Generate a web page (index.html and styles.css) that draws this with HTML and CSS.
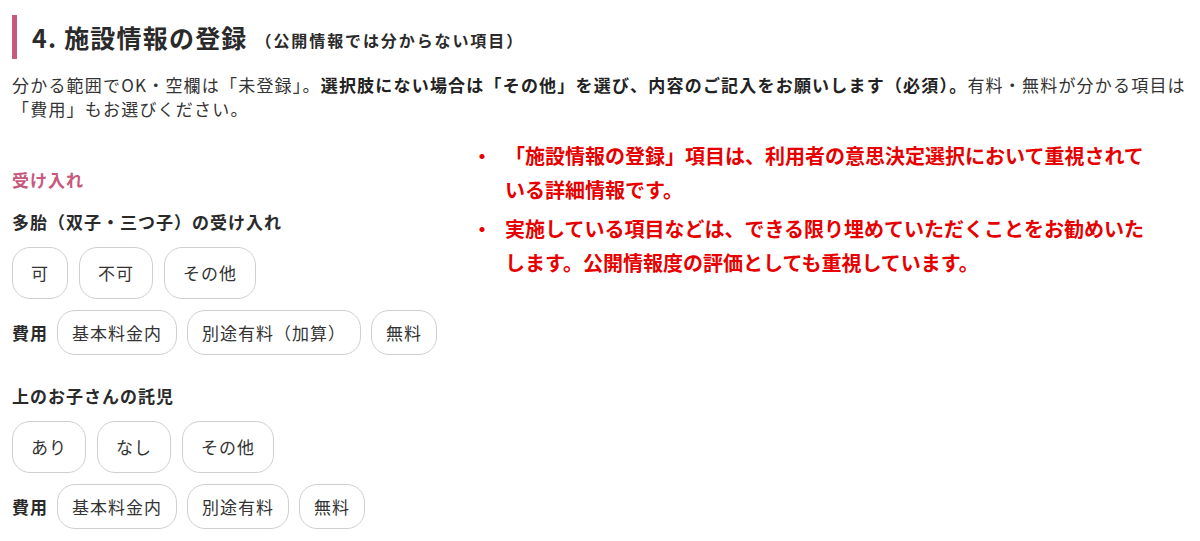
FILE: index.html
```html
<!DOCTYPE html>
<html lang="ja">
<head>
<meta charset="utf-8">
<title>施設情報の登録</title>
<link rel="stylesheet" href="styles.css">
</head>
<body>
<div class="page">
  <h2 class="section-title">4. 施設情報の登録<span class="sub">（公開情報では分からない項目）</span></h2>
  <p class="lead">分かる範囲でOK・空欄は「未登録」。<b>選択肢にない場合は「その他」を選び、内容のご記入をお願いします（必須）。</b>有料・無料が分かる項目は<br>「費用」もお選びください。</p>
  <div class="columns">
    <div class="form-col">
      <h3 class="group">受け入れ</h3>
      <div class="field">
        <div class="label">多胎（双子・三つ子）の受け入れ</div>
        <div class="chips big">
          <span class="chip">可</span>
          <span class="chip">不可</span>
          <span class="chip">その他</span>
        </div>
        <div class="chips small">
          <span class="cost">費用</span>
          <span class="chip">基本料金内</span>
          <span class="chip">別途有料（加算）</span>
          <span class="chip">無料</span>
        </div>
      </div>
      <div class="field second">
        <div class="label">上のお子さんの託児</div>
        <div class="chips big">
          <span class="chip">あり</span>
          <span class="chip">なし</span>
          <span class="chip">その他</span>
        </div>
        <div class="chips small">
          <span class="cost">費用</span>
          <span class="chip">基本料金内</span>
          <span class="chip">別途有料</span>
          <span class="chip">無料</span>
        </div>
      </div>
    </div>
    <ul class="notes">
      <li>「施設情報の登録」項目は、利用者の意思決定選択において重視されている詳細情報です。</li>
      <li>実施している項目などは、できる限り埋めていただくことをお勧めいたします。公開情報度の評価としても重視しています。</li>
    </ul>
  </div>
</div>
</body>
</html>
```
FILE: styles.css
```css
html, body {
  margin: 0;
  padding: 0;
  background: #ffffff;
}
body {
  font-family: "Noto Sans CJK JP", "Noto Sans", sans-serif;
  color: #333333;
  overflow: hidden;
}
.page {
  padding: 15px 0 0 12px;
}
.section-title {
  margin: 0;
  border-left: 5px solid #c8587c;
  padding-left: 15px;
  height: 44px;
  line-height: 44px;
  font-size: 25px;
  font-weight: 700;
  letter-spacing: 1.2px;
  color: #2a2a2a;
}
.section-title .sub {
  font-size: 16px;
  letter-spacing: 1.9px;
  margin-left: 8px;
  vertical-align: 1px;
}
.lead {
  margin: 14px 0 0;
  font-size: 17px;
  letter-spacing: 1.2px;
  line-height: 24px;
  white-space: nowrap;
}
.lead b {
  font-weight: 700;
  color: #222;
}
.columns {
  display: flex;
  margin-top: 18px;
}
.form-col {
  width: 460px;
  padding-top: 29px;
}
.group {
  margin: 0;
  font-size: 17px;
  line-height: 24px;
  font-weight: 700;
  letter-spacing: 1px;
  color: #c8587c;
}
.field {
  margin-top: 18px;
}
.field.second {
  margin-top: 29px;
}
.label {
  font-size: 17px;
  line-height: 24px;
  font-weight: 700;
  letter-spacing: 1px;
  color: #2a2a2a;
}
.chips {
  display: flex;
  align-items: center;
  font-size: 17px;
  letter-spacing: 1px;
  line-height: 24px;
}
.chips.big {
  margin-top: 13px;
  gap: 11px;
}
.chips.small {
  margin-top: 11px;
  gap: 10px;
}
.chip {
  border: 1px solid #cfcfcf;
  border-radius: 18px;
  color: #333;
  white-space: nowrap;
}
.chips.big .chip {
  padding: 13px 18px;
}
.chips.small .chip {
  padding: 10px 14px 9px;
}
.cost {
  font-weight: 700;
  color: #2a2a2a;
  margin-right: -1px;
}
.notes {
  list-style: none;
  margin: 0;
  padding: 0;
  width: 686px;
}
.notes li {
  position: relative;
  padding-left: 33px;
  font-size: 20px;
  line-height: 34px;
  font-weight: 700;
  color: #e60000;
}
.notes li + li {
  margin-top: 5px;
}
.notes li::before {
  content: "・";
  position: absolute;
  left: 0;
  top: 0;
  width: 20px;
}
```
